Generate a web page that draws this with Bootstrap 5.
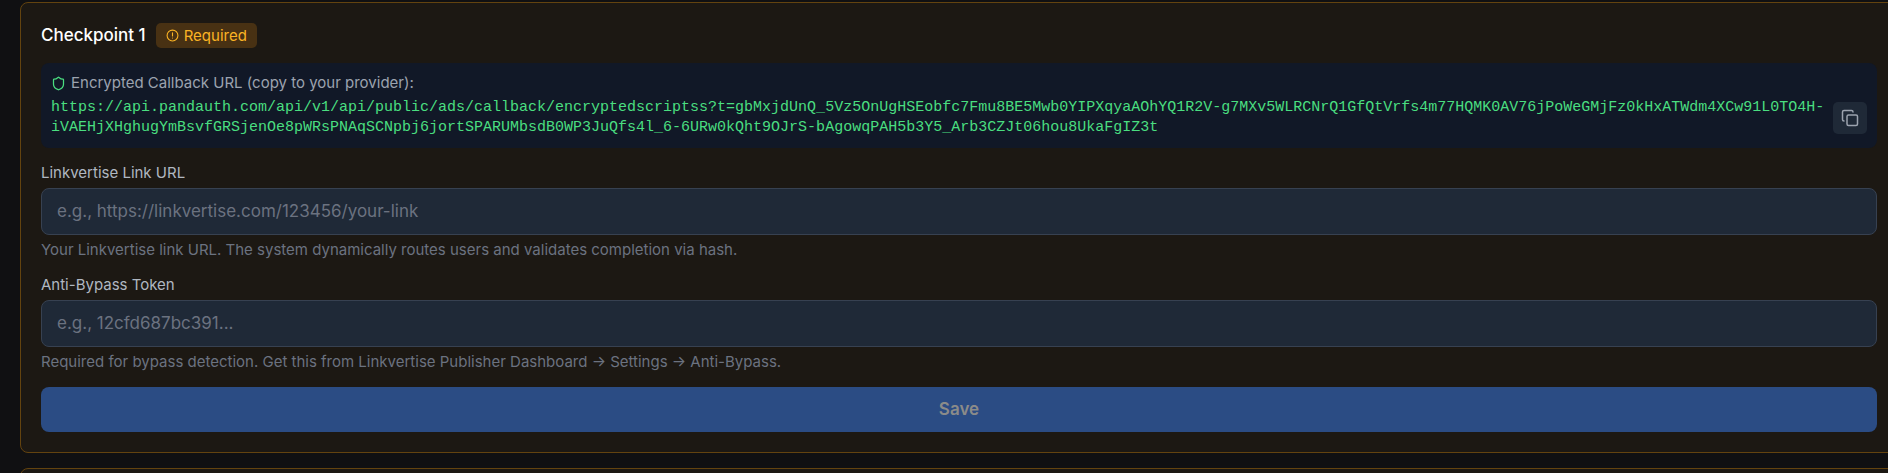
<!DOCTYPE html>
<html lang="en">
<head>
<meta charset="utf-8">
<meta name="viewport" content="width=device-width, initial-scale=1">
<title>Checkpoints</title>
<link href="https://cdn.jsdelivr.net/npm/bootstrap@5.3.0/dist/css/bootstrap.min.css" rel="stylesheet">
<style>
  body { background: #101012; color: #fff; font-family: Inter, sans-serif; font-size: 15px; line-height: 20px; overflow: hidden; }
  .checkpoint-list { padding: 2px 0 0 20px; margin-right: -10px; gap: 15px; }
  .checkpoint { background: #1c1813; border: 1px solid #63430f; border-radius: 8px; padding: 20px; }
  .checkpoint-head { gap: 10px; margin-bottom: 15px; }
  .checkpoint-title { font-size: 17px; line-height: 25px; font-weight: 500; margin: 0; }
  .required-tag { background: #483113; color: #fbb324; border-radius: 5px; padding: 0 10px; gap: 5px; line-height: 25px; }
  .callback-box { background: #111827; border-radius: 8px; padding: 10px; margin-bottom: 15px; }
  .callback-label { color: #9ca3af; gap: 5px; margin-bottom: 5px; }
  .callback-row { gap: 8px; }
  .callback-url { color: #4ade80; font-family: "Liberation Mono", monospace; font-size: 15px; line-height: 20px; word-break: break-all; }
  .copy-btn { background: #1f2937; color: #9ca3af; border: 0; border-radius: 5px; padding: 7px 8px; line-height: 0; }
  .field-label { display: block; color: #b0b7c1; margin-bottom: 5px; }
  .form-control.field-input { background: #1f2937; border: 1px solid #374151; border-radius: 8px; padding: 10px 15px; font-size: 17px; line-height: 25px; color: #fff; }
  .form-control.field-input::placeholder { color: #6b7280; opacity: 1; }
  .field-help { color: #6b7280; margin: 5px 0 15px; }
  .btn.save-btn { background: #2b4c84; color: #8b8b89; border: 0; border-radius: 8px; padding: 10px; font-size: 17px; line-height: 25px; font-weight: 600; opacity: 1; }
</style>
</head>
<body>
<main class="checkpoint-list d-flex flex-column">
  <section class="checkpoint">
    <div class="checkpoint-head d-flex align-items-center">
      <h2 class="checkpoint-title">Checkpoint 1</h2>
      <span class="required-tag d-inline-flex align-items-center">
        <svg width="13" height="13" viewBox="0 0 24 24" fill="none" stroke="currentColor" stroke-width="2" stroke-linecap="round" stroke-linejoin="round" aria-hidden="true"><circle cx="12" cy="12" r="10"/><path d="M12 7v6M12 16.500v.01"/></svg>
        Required
      </span>
    </div>
    <div class="callback-box">
      <div class="callback-label d-flex align-items-center">
        <svg width="15" height="15" viewBox="0 0 24 24" fill="none" stroke="#4ade80" stroke-width="2" stroke-linecap="round" stroke-linejoin="round" aria-hidden="true"><path d="M20 13c0 5-3.500 7.500-7.660 8.950a1 1 0 0 1-.67-.01C7.500 20.500 4 18 4 13V6a1 1 0 0 1 1-1c2 0 4.500-1.200 6.240-2.720a1.170 1.170 0 0 1 1.520 0C14.510 3.810 17 5 19 5a1 1 0 0 1 1 1z"/></svg>
        Encrypted Callback URL (copy to your provider):
      </div>
      <div class="callback-row d-flex align-items-center">
        <code class="callback-url flex-grow-1">https://api.pandauth.com/api/v1/api/public/ads/callback/encryptedscriptss?t=gbMxjdUnQ_5Vz5OnUgHSEobfc7Fmu8BE5Mwb0YIPXqyaAOhYQ1R2V-g7MXv5WLRCNrQ1GfQtVrfs4m77HQMK0AV76jPoWeGMjFz0kHxATWdm4XCw91L0TO4H-iVAEHjXHghugYmBsvfGRSjenOe8pWRsPNAqSCNpbj6jortSPARUMbsdB0WP3JuQfs4l_6-6URw0kQht9OJrS-bAgowqPAH5b3Y5_Arb3CZJt06hou8UkaFgIZ3t</code>
        <button type="button" class="copy-btn flex-shrink-0" aria-label="Copy callback URL">
          <svg width="18" height="18" viewBox="0 0 24 24" fill="none" stroke="currentColor" stroke-width="2" stroke-linecap="round" stroke-linejoin="round" aria-hidden="true"><rect x="8" y="8" width="14" height="14" rx="2"/><path d="M4 16c-1.100 0-2-.9-2-2V4c0-1.100.9-2 2-2h10c1.100 0 2 .9 2 2"/></svg>
        </button>
      </div>
    </div>
    <form>
      <label class="field-label" for="link-url">Linkvertise Link URL</label>
      <input class="form-control field-input" id="link-url" type="text" placeholder="e.g., https://linkvertise.com/123456/your-link">
      <p class="field-help">Your Linkvertise link URL. The system dynamically routes users and validates completion via hash.</p>
      <label class="field-label" for="bypass-token">Anti-Bypass Token</label>
      <input class="form-control field-input" id="bypass-token" type="text" placeholder="e.g., 12cfd687bc391...">
      <p class="field-help">Required for bypass detection. Get this from Linkvertise Publisher Dashboard → Settings → Anti-Bypass.</p>
      <button type="submit" class="btn save-btn w-100 d-block" disabled>Save</button>
    </form>
  </section>
  <section class="checkpoint"></section>
</main>
<script src="https://cdn.jsdelivr.net/npm/bootstrap@5.3.0/dist/js/bootstrap.bundle.min.js"></script>
</body>
</html>
